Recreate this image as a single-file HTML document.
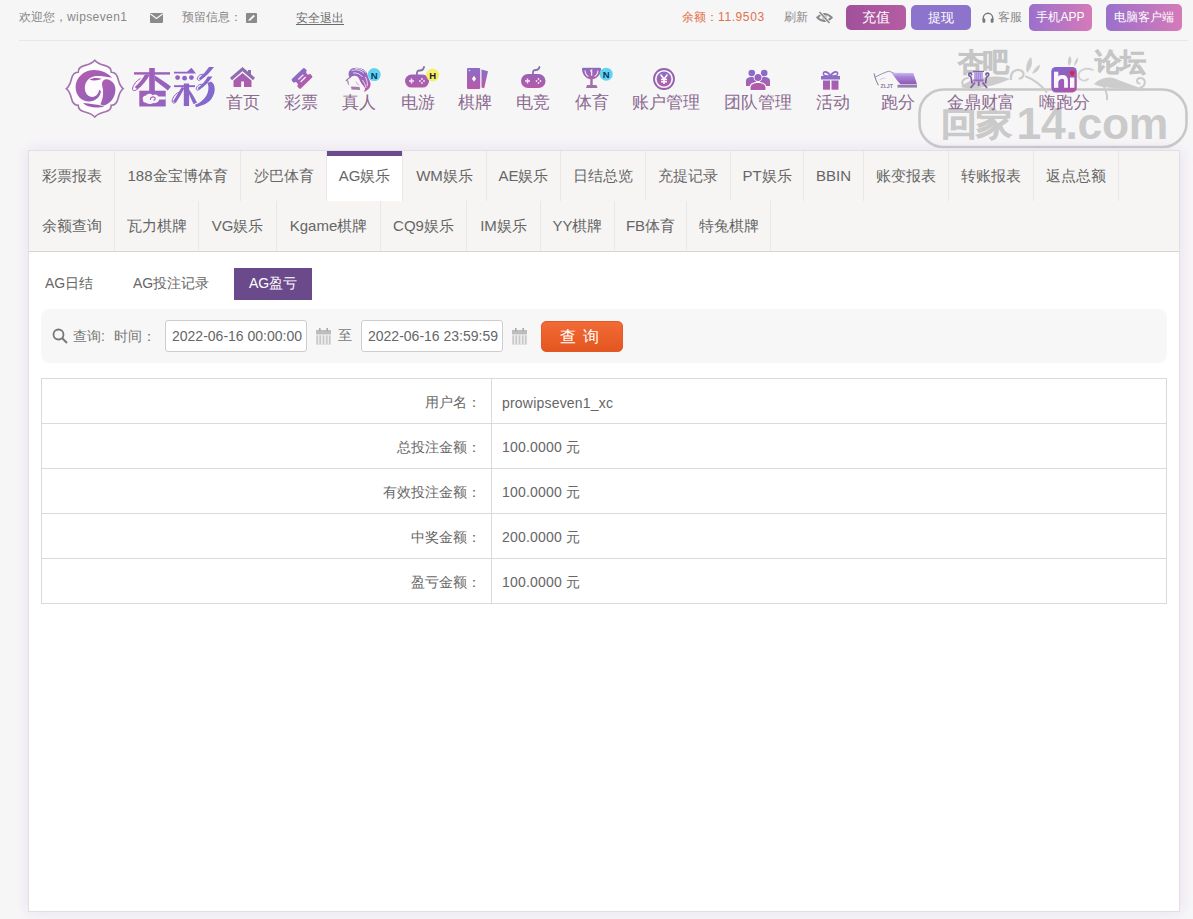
<!DOCTYPE html>
<html><head><meta charset="utf-8">
<style>
*{box-sizing:border-box}
html,body{margin:0;padding:0}
body{width:1193px;height:919px;overflow:hidden;position:relative;background:#f7f6f7;font-family:"Liberation Sans",sans-serif;color:#666}
.a{position:absolute;white-space:nowrap}
.top{font-size:12px;color:#888;line-height:16px}
.btn{position:absolute;top:5px;height:25px;border-radius:5px;color:#fff;font-size:12px;line-height:25px;text-align:center}
.nav{position:absolute;top:92px;font-size:17px;color:#8b6a90;line-height:20px;white-space:nowrap}
.nav svg{display:block;margin:0 auto}
#box{position:absolute;left:28px;top:150px;width:1152px;height:762px;background:#fff;border:1px solid #e2dfe3;box-shadow:0 0 14px rgba(212,190,232,.42)}
#tabs{position:absolute;left:0;top:0;width:1150px;height:101px;background:#f6f5f4;border-bottom:1px solid #d6d4d4}
.tab{position:absolute;height:50px;border-right:1px solid #e9e7e7;font-size:15px;line-height:50px;color:#666;text-align:center}
.tab.on{background:#fff;box-shadow:inset 0 5px 0 #6b4b8c}
.sub{position:absolute;top:117px;height:32px;line-height:31px;font-size:14px;color:#666;text-align:center}
.sub.on{background:#6a4a8b;color:#fff}
#q{position:absolute;left:12px;top:158px;width:1126px;height:54px;background:#f7f7f7;border-radius:8px}
.inp{position:absolute;top:11px;height:32px;border:1px solid #cdcdcd;border-radius:3px;background:#fff;font-size:14px;line-height:31px;color:#666;padding-left:6px}
#tbl{position:absolute;left:12px;top:227px;width:1126px;border-collapse:collapse}
#tbl td{height:45px;border:1px solid #dadada;font-size:14px;color:#666;padding:3px 0 0 0}
#tbl td.l{width:450px;text-align:right;padding-right:10px}
#tbl td.r{padding-left:10px;letter-spacing:0.2px}
</style></head><body>

<!-- top bar -->
<div class="a top" style="left:19px;top:9px">欢迎您，<span style="letter-spacing:0.4px">wipseven1</span></div>
<svg class="a" style="left:150px;top:13px" width="13" height="10" viewBox="0 0 13 10"><rect x="0" y="0" width="13" height="10" rx="1" fill="#8a8a8a"/><path d="M0.5 1 L6.5 5.5 L12.5 1" stroke="#f7f6f7" stroke-width="1.3" fill="none"/></svg>
<div class="a top" style="left:182px;top:9px">预留信息：</div>
<svg class="a" style="left:246px;top:13px" width="11" height="10" viewBox="0 0 11 10"><rect width="11" height="10" rx="1" fill="#8a8a8a"/><path d="M2.5 8 L3 6.2 L7.5 1.8 L8.9 3.2 L4.4 7.6 Z" fill="#f7f6f7"/></svg>
<div class="a top" style="left:296px;top:10px;text-decoration:underline;text-underline-offset:2px;color:#6a6a6a">安全退出</div>

<div class="a top" style="left:682px;top:9px;color:#e0714a">余额：<span style="letter-spacing:0.6px">11.9503</span></div>
<div class="a top" style="left:784px;top:9px;color:#888">刷新</div>
<svg class="a" style="left:816px;top:11px" width="17" height="13" viewBox="0 0 17 13"><path d="M1.2 6.5 Q8.5 -0.5 15.8 6.5 Q8.5 13.5 1.2 6.5 Z" fill="none" stroke="#8a8a8a" stroke-width="1.8"/><circle cx="8.5" cy="6.5" r="2.2" fill="#8a8a8a"/><path d="M3.5 1 L13.5 12" stroke="#f7f6f7" stroke-width="3"/><path d="M3.5 1 L13.5 12" stroke="#8a8a8a" stroke-width="1.6"/></svg>
<div class="btn" style="left:846px;width:60px;font-size:14px;background:linear-gradient(90deg,#a0519a,#b55da3)">充值</div>
<div class="btn" style="left:911px;width:60px;font-size:13px;background:#8c74cc">提现</div>
<svg class="a" style="left:982px;top:12px" width="12" height="11" viewBox="0 0 12 11"><path d="M1.3 8 V6 A4.7 4.7 0 0 1 10.7 6 V8" fill="none" stroke="#777" stroke-width="1.4"/><rect x="0.5" y="6.5" width="2.8" height="4.2" rx="1" fill="#777"/><rect x="8.7" y="6.5" width="2.8" height="4.2" rx="1" fill="#777"/></svg>
<div class="a top" style="left:998px;top:9px;color:#888">客服</div>
<div class="btn" style="left:1029px;top:4px;width:63px;height:27px;line-height:27px;background:linear-gradient(90deg,#9a70cc,#d67ab8)">手机APP</div>
<div class="btn" style="left:1106px;top:4px;width:76px;height:27px;line-height:27px;background:linear-gradient(90deg,#9a70cc,#d67ab8)">电脑客户端</div>
<div class="a" style="left:19px;top:40px;width:1169px;height:1px;background:#e8e7e9"></div>

<!-- NAV placeholder -->
<svg class="a" style="left:0;top:0" width="1193" height="150" viewBox="0 0 1193 150">
 <defs>
  <linearGradient id="g" x1="0" y1="0" x2="0" y2="1"><stop offset="0" stop-color="#8a6cc8"/><stop offset="1" stop-color="#b85aa8"/></linearGradient>
  <linearGradient id="g2" x1="0" y1="0" x2="0" y2="1"><stop offset="0" stop-color="#9a62b6"/><stop offset="1" stop-color="#b45aaa"/></linearGradient>
  <linearGradient id="lg" x1="0" y1="0" x2="1" y2="1"><stop offset="0" stop-color="#b45cb0"/><stop offset="1" stop-color="#8c62b8"/></linearGradient>
  <linearGradient id="lg2" x1="0" y1="0" x2="1" y2="0"><stop offset="0" stop-color="#a95cb2"/><stop offset="1" stop-color="#8a6ac8"/></linearGradient>
 </defs>
 <!-- watermark -->
 <g opacity="0.9">
  <rect x="919.5" y="89.5" width="267" height="57.5" rx="24" fill="rgba(255,255,255,0.2)" stroke="#c4c4c4" stroke-width="2.6"/>
  <text x="958" y="71" font-size="26" font-weight="bold" fill="#d4d4d4" stroke="#c0c0c0" stroke-width="0.7" style="font-family:'Liberation Sans',sans-serif" letter-spacing="-1">杏吧</text>
  <text x="1095" y="71" font-size="26" font-weight="bold" fill="#d4d4d4" stroke="#c0c0c0" stroke-width="0.7" style="font-family:'Liberation Sans',sans-serif" letter-spacing="-1">论坛</text>
  <text transform="translate(941,135) scale(1.13,1)" x="0" y="0" font-size="31.5" font-weight="bold" fill="#c6c6c6" stroke="#c6c6c6" stroke-width="0.8" style="font-family:'Liberation Sans',sans-serif" letter-spacing="-1">回家</text>
  <text x="1016.5" y="138.6" font-size="44.5" font-weight="bold" fill="#c6c6c6" style="font-family:'Liberation Sans',sans-serif" letter-spacing="-0.3">14.com</text>
  <g fill="#c8c8c8">
   <path d="M961 86.5 C968 80 982 76.5 996 76.5 C1002 76.5 1007 77.5 1010 79 C1000 84 985 88 972 88.5 C967 88.7 963 88 961 86.5 Z"/>
   <path d="M1027 73 C1025 67 1027 61 1031 57 C1033 62 1032 68 1027 73 Z"/>
   <path d="M1032 74 C1034 69 1037 66 1040 64.5 C1040 69 1037 72.5 1032 74 Z"/>
   <path d="M1094 84 C1100 78 1108 76 1116 79 C1124 82 1134 86 1142 88.5 C1130 89 1118 89 1108 87.5 C1102 86.8 1097 86 1094 84 Z"/>
   <path d="M1069 66 C1067 62 1068 58 1070 56 C1072 59 1072 63 1069 66 Z"/>
   <path d="M1074 66 C1074 62 1076 59 1078 57.5 C1078.5 61 1077 64 1074 66 Z"/>
  </g>
  <g fill="none" stroke="#c8c8c8" stroke-linecap="round" stroke-width="2">
   <path d="M968 78 C962 78.5 960.5 84 964.5 86"/>
   <path d="M1011 79 C1010 72 1016 68.5 1021 70.5 C1025 72.5 1024 78 1019.5 78.5" stroke-width="2.2"/>
   <path d="M1026 76.5 C1034 79.5 1041 85 1046.5 92"/>
   <path d="M1104 87 C1106 91 1108 95 1107 99.5"/>
   <path d="M1140 88 C1146 86 1146.5 79 1141 78 C1136.5 77.5 1135.5 83 1139.5 83.5"/>
   <path d="M1093 70 C1086 67 1078 70 1078.5 76 C1079 80.5 1085 82 1088 79" stroke="#d0d0d0" stroke-width="1.8"/>
   <path d="M1058 73 C1054 77 1053 85 1054 92" stroke-width="1.6"/>
  </g>
 </g>
 <!-- logo emblem -->
 <path d="M94.75 60.30 C97.30 63.40 100.80 64.50 104.50 65.40 C109.20 66.50 111.40 69.00 111.25 72.20 C114.45 72.05 116.95 74.25 118.05 78.95 C118.95 82.65 120.05 86.15 123.15 88.70 C120.05 91.25 118.95 94.75 118.05 98.45 C116.95 103.15 114.45 105.35 111.25 105.20 C111.40 108.40 109.20 110.90 104.50 112.00 C100.80 112.90 97.30 114.00 94.75 117.10 C92.20 114.00 88.70 112.90 85.00 112.00 C80.30 110.90 78.10 108.40 78.25 105.20 C75.05 105.35 72.55 103.15 71.45 98.45 C70.55 94.75 69.45 91.25 66.35 88.70 C69.45 86.15 70.55 82.65 71.45 78.95 C72.55 74.25 75.05 72.05 78.25 72.20 C78.10 69.00 80.30 66.50 85.00 65.40 C88.70 64.50 92.20 63.40 94.75 60.30 Z" fill="#fdfbfd" stroke="#a274ae" stroke-width="1.6"/>
 <path d="M112 77.8 C108 73 101 70 94.3 70 C84 70 75.6 77.5 75.6 87 C75.6 96 82 101.5 89 101.5 C95 101.5 100.5 97 100.9 91.3 L99.4 89.6 C98.5 94 96 97 92.5 97 C88 97 84.8 93 84.8 88 C84.8 81 90 76 97 76 C102 76 106 76.5 112 77.8 Z" fill="url(#lg)"/>
 <path d="M102 84 C102 80.5 105 78.5 108 79.5 C112 80.5 115.2 84 115.4 89 C115.6 96 112 102 105.5 105 C103.5 105.8 101.5 105.5 100.5 104 C102.5 100 103.5 95 103 90 C102.8 88 102 86 102 84 Z" fill="url(#lg)"/>
 <path d="M89.5 79.8 C92 77.8 97 77.3 101.5 78.8 C99 80.3 94 81.3 89.5 79.8 Z" fill="#a257ae"/>
 <path d="M83 103 C89.5 104 97 104 104.5 106.5 C100 108 94 108 88.5 106.3 C86.5 105.6 84.5 104.5 83 103 Z" fill="#9a5cb2"/>
 <linearGradient id="lgt" gradientUnits="userSpaceOnUse" x1="132" y1="70" x2="214" y2="105"><stop offset="0" stop-color="#a65cb4"/><stop offset="1" stop-color="#7f6ad0"/></linearGradient>
 <g fill="url(#lgt)">
  <rect x="134" y="72.2" width="36" height="2.4"/>
  <rect x="149.2" y="68" width="5.6" height="23"/>
  <path d="M150 74.5 C147 80 142.5 85.5 137.5 89.5 L134.8 87 C139.5 83 142.8 78.5 145 74.5 Z"/>
  <path d="M154.8 75.5 C160 78.5 165.5 82.5 171 86.5 L167.8 90.5 C162.8 86.5 158.5 83 154.8 80.5 Z"/>
  <path d="M139.3 90.7 H165.7 V106.5 H139.3 Z"/>
  <path d="M174 71.8 H187 C188.5 70.5 190 69 191.5 67.8 L196 73.4 H174 Z"/>
  <circle cx="177.6" cy="77.6" r="2.4"/><circle cx="184.6" cy="78.2" r="2.4"/><circle cx="191.4" cy="77.6" r="2.4"/>
  <rect x="174" y="85.2" width="21" height="1.9"/>
  <rect x="183.8" y="83.5" width="5.3" height="22.5"/>
  <path d="M184.5 88 C182 93 179 98 175.8 103 L173 101.5 C175.8 96.8 179 91.8 181.8 87 Z"/>
  <path d="M189 89.5 C192 93.5 194.8 98 197 102.5 L193.6 104.2 C191.5 100 189.5 95.5 188 91.2 Z"/>
  <path d="M214 67 C210.5 71.5 206 76.5 200.5 80.2 L198.8 78.2 C203 74.8 206.5 70.8 209 67 Z"/>
  <path d="M212.5 76.5 C209 81.5 205 86 199.2 90 L197.6 88 C202 84.8 205.3 80.8 207.8 76.5 Z"/>
  <path d="M211 81.5 C215.5 84 216.5 92 211 99.5 C207.5 103.5 201.5 106.3 195.8 107 L195 104.8 C200 103 204 99.8 206.3 95.8 C209 91.2 209 86 207.3 83 Z"/>
 </g>
 <g fill="none" stroke="url(#lgt)" stroke-width="1">
  <path d="M137.5 89 C134.5 91.5 131.8 91 132.6 88 C133.5 84.5 136.5 80.5 140.5 78.5"/>
  <path d="M175.5 102.5 C172.5 104.5 171.3 101.5 172.8 98.3 C174.3 95.2 176.8 93 179.2 92"/>
  <path d="M200.5 79.8 C197.5 81.5 196.3 78.8 198.2 76.4 C199.7 74.6 201.8 74 203.6 74.4"/>
  <path d="M199.2 89.6 C196.2 91.3 195.3 88.4 197.3 86.2 C198.8 84.6 200.8 84 202.6 84.4"/>
 </g>
 <path d="M143.2 100.2 C141.8 98.2 143.2 95.4 145.8 95.8 C146.8 93.4 150.8 92.8 152.4 95.2 C154.4 93.8 157.4 94.2 158.4 96.4 L165.7 96.4 V99.6 L159.2 99.6 C158.8 102 156.2 103.6 153.2 103 C151.2 104.4 147.2 104.4 145.6 102.6 C143.6 102.6 142.6 101.2 143.2 100.2 Z" fill="#f8f6f8"/>
 <path d="M150.5 99.8 C150 97.5 152.5 96.3 154.3 97.3 C155.8 98.2 155.3 100.2 153.5 100.2" fill="none" stroke="#9a62bc" stroke-width="1.2"/>

 <!-- house -->
 <polyline points="231,79 242.5,69 254,79" fill="none" stroke="#8e6eb0" stroke-width="3" stroke-linejoin="miter"/>
 <rect x="248" y="70" width="3" height="5" fill="#8e6eb0"/>
 <path d="M233.5 80.5 L242.5 73 L251.5 80.5 V87 H233.5 Z" fill="url(#g2)"/>
 <rect x="241.2" y="81.5" width="2.8" height="5.5" fill="#fff"/>

 <!-- ticket -->
 <g transform="translate(302 78.3) rotate(-44)">
  <path d="M-7.5 -6.5 H7.5 Q9 -6.5 9 -5 V-2.3 A2.3 2.3 0 0 0 9 2.3 V5 Q9 6.5 7.5 6.5 H-7.5 Q-9 6.5 -9 5 V2.3 A2.3 2.3 0 0 0 -9 -2.3 V-5 Q-9 -6.5 -7.5 -6.5 Z" fill="url(#g)"/>
  <rect x="-3.5" y="-2.3" width="7" height="1.3" fill="#f6e8f8"/>
  <rect x="-3.5" y="1" width="7" height="1.3" fill="#f6e8f8"/>
 </g>

 <!-- woman -->
 <path d="M349 76.5 C347.3 71 351 67.5 357 67.8 C363 68 367 71 367.8 76 C368.3 79 370.6 81 370.6 84 C370.6 87 369.2 89 366.6 90.6 C365.6 91.5 364.6 92 363.8 92 C365 90 365.8 88.5 364 86.5 C362.3 84.5 360.6 82.5 359.6 80 C358.6 77.5 357.5 76.2 355.5 75.8 C353 75.4 351 76.4 350 78.5 Z" fill="url(#g)"/>
 <path d="M351.5 70.5 C355.5 69.2 360.5 70 363.8 73.2 M353 73 C356.8 72.5 360.3 74 362.5 77 M365.3 76.8 C366.8 79.8 367.8 83 367.2 86.2 M355 68.6 C359 68.2 363 69.5 366 72.5 M362.5 80 C364 82.5 365.5 84.5 366 88" fill="none" stroke="#f2e8f6" stroke-width="0.9"/>
 <path d="M350 77 C349 78.5 347.6 79.3 346.3 80.4 L348 81.2 C347.8 82.6 348 83.8 348.8 84.7" fill="none" stroke="#9c78ae" stroke-width="1.1"/>
 <path d="M351 86.5 L359.5 86.9 L360.2 89.9 L351.5 89.6 Z" fill="#a47aa8"/>
 <path d="M356 81.5 C357 83.5 358 85 359.3 85.6" fill="none" stroke="#b890c0" stroke-width="0.8"/>
 <circle cx="374.2" cy="74.6" r="6.5" fill="#60d4ee"/>
 <text x="374.2" y="78.5" font-size="9.5" font-weight="bold" fill="#0e3262" text-anchor="middle" style="font-family:'Liberation Sans',sans-serif">N</text>

 <!-- controller 1 -->
 <path d="M417 74.5 C416.5 71 418 70.5 420 70.5 C422 70.5 423.5 69.5 424 67" fill="none" stroke="#8470a8" stroke-width="1.8" stroke-linecap="round"/>
 <rect x="405" y="74.6" width="24" height="13" rx="6.5" fill="url(#g2)"/>
 <path d="M409 81 H414 M411.5 78.5 V83.5" stroke="#f6e6f6" stroke-width="1.5"/>
 <circle cx="422" cy="79" r="0.9" fill="#f6e6f6"/><circle cx="422" cy="83" r="0.9" fill="#f6e6f6"/><circle cx="420" cy="81" r="0.9" fill="#f6e6f6"/><circle cx="424" cy="81" r="0.9" fill="#f6e6f6"/>
 <circle cx="432.7" cy="75" r="6.5" fill="#f5f06a"/>
 <text x="432.7" y="78.9" font-size="9.5" font-weight="bold" fill="#222" text-anchor="middle" style="font-family:'Liberation Sans',sans-serif">H</text>

 <!-- cards -->
 <path d="M481.5 69.5 L488 71.2 L484.2 88.2 L481.5 87.6 Z" fill="url(#g)"/>
 <rect x="467" y="68" width="13.2" height="21" rx="1" fill="url(#g)"/>
 <path d="M474 75.8 L476 78.8 L474 81.8 L472 78.8 Z" fill="#fff"/>
 <circle cx="469.5" cy="70.5" r="0.8" fill="#e8dcf6"/>

 <!-- controller 2 -->
 <path d="M533 74 C532.5 70.5 534 70 536 70 C538 70 539 69 539.5 67" fill="none" stroke="#8470a8" stroke-width="1.8" stroke-linecap="round"/>
 <rect x="521" y="74" width="24.5" height="14" rx="7" fill="url(#g2)"/>
 <path d="M525 81 H530 M527.5 78.5 V83.5" stroke="#f6e6f6" stroke-width="1.5"/>
 <circle cx="538.5" cy="79" r="0.9" fill="#f6e6f6"/><circle cx="538.5" cy="83" r="0.9" fill="#f6e6f6"/><circle cx="536.5" cy="81" r="0.9" fill="#f6e6f6"/><circle cx="540.5" cy="81" r="0.9" fill="#f6e6f6"/>

 <!-- trophy -->
 <path d="M582.5 68.3 H600.5 C600.5 74.8 596.5 78.8 591.5 78.8 C586.5 78.8 582.5 74.8 582.5 68.3 Z" fill="url(#g)"/>
 <path d="M582.5 68.3 H600.5 C600.5 74.8 596.5 78.8 591.5 78.8 C586.5 78.8 582.5 74.8 582.5 68.3 Z" fill="none" stroke="#8060a8" stroke-width="0.9"/>
 <rect x="590.3" y="78.3" width="2.4" height="7" fill="#a46aae"/>
 <path d="M587 85 H596.5 L597.5 88 H586 Z" fill="#a070a6"/>
 <path d="M585 70.5 C585.3 73.5 586.5 75.5 588.5 76.5" fill="none" stroke="#f2e6f6" stroke-width="1.2"/>
 <path d="M598 70.5 C597.7 73.5 596.5 75.5 594.5 76.5" fill="none" stroke="#f2e6f6" stroke-width="1.2"/>
 <path d="M590.2 71.3 L591.6 70.2 V75.8" fill="none" stroke="#f2e6f6" stroke-width="1.3"/>
 <circle cx="606.2" cy="74.2" r="6.5" fill="#60d4ee"/>
 <text x="606.2" y="78.1" font-size="9.5" font-weight="bold" fill="#0e3262" text-anchor="middle" style="font-family:'Liberation Sans',sans-serif">N</text>

 <!-- yen coin -->
 <circle cx="664" cy="79" r="10" fill="none" stroke="#9462ac" stroke-width="1.8"/>
 <circle cx="664" cy="79" r="7.4" fill="url(#g)"/>
 <path d="M660.5 74.5 L664 79 L667.5 74.5 M664 79 V84 M661 79.5 H667 M661 81.8 H667" fill="none" stroke="#fff" stroke-width="1.5"/>

 <!-- people -->
 <circle cx="751.8" cy="73" r="3.3" fill="#8a6cc8"/>
 <path d="M746 86 V81 C746 78 748.5 77 751.8 77 C755 77 757 78 757 80 L753 86 Z" fill="url(#g)"/>
 <circle cx="764.2" cy="73" r="3.3" fill="#8a6cc8"/>
 <path d="M770 86 V81 C770 78 767.5 77 764.2 77 C761 77 759 78 759 80 L763 86 Z" fill="url(#g)"/>
 <circle cx="758" cy="77.5" r="4.3" fill="#fff"/>
 <circle cx="758" cy="77.5" r="3.5" fill="#9a62bc"/>
 <path d="M749.5 90.5 V87.5 C749.5 83.5 753 82 758 82 C763 82 766.5 83.5 766.5 87.5 V90.5 Z" fill="#fff"/>
 <path d="M750.5 90 V87.8 C750.5 84.5 753.5 83 758 83 C762.5 83 765.5 84.5 765.5 87.8 V90 Z" fill="#b25aac"/>

 <!-- gift -->
 <path d="M830.5 76 C828 71 822.5 70.5 823.5 74.5 C824 76 828 76 830.5 76 C833 76 837 76 837.5 74.5 C838.5 70.5 833 71 830.5 76 Z" fill="none" stroke="#8a6cc8" stroke-width="1.6"/>
 <rect x="821" y="76" width="19" height="3.5" fill="#8e6cc4"/>
 <rect x="823" y="80.5" width="7" height="9.2" fill="url(#g2)"/>
 <rect x="831.5" y="80.5" width="7" height="9.2" fill="url(#g2)"/>

 <!-- rhino logo -->
 <linearGradient id="grh" x1="0" y1="0" x2="0" y2="1"><stop offset="0" stop-color="#cbb8f2"/><stop offset="0.35" stop-color="#a884d8"/><stop offset="1" stop-color="#9058b8"/></linearGradient>
 <path d="M874 73.3 C875 77.5 876.5 82 878.4 85.3" fill="none" stroke="#8e86a0" stroke-width="1.1"/>
 <path d="M874.8 77.2 C878.5 75.5 884 72.5 888.8 71.2 C891 71.8 893 72.8 896 74.2" fill="none" stroke="#9a92aa" stroke-width="1"/>
 <path d="M879.5 80 C881.5 78.5 883.5 78 885.5 78.3" fill="none" stroke="#cdc2dc" stroke-width="0.8"/>
 <path d="M891.5 72.8 L913.3 73 L917 84.2 L900.5 84.2 C897 81 894.5 77 891.5 72.8 Z" fill="url(#grh)"/>
 <text x="880.5" y="88" font-size="5.2" font-weight="bold" fill="#8c7aa0" style="font-family:'Liberation Sans',sans-serif">ZLJT</text>
 <rect x="897.5" y="84.8" width="19.5" height="2.8" fill="#9480b0"/>

 <!-- cauldron -->
 <path d="M973 71.4 H984" stroke="#86629e" stroke-width="1.2"/>
 <rect x="974" y="72" width="9" height="7.4" fill="#bca6ea"/>
 <path d="M976.3 72.5 V79 M978.5 72.5 V79 M980.7 72.5 V79" stroke="#9c80d2" stroke-width="0.8"/>
 <rect x="973.4" y="79.3" width="10.2" height="2.2" fill="#9a6cc8"/>
 <path d="M972 83.5 C971.5 80 971.5 77.5 970.5 76.5 C968.5 76 968 73.5 970 73.2 C971.6 73 972 74.6 971 75.4" fill="none" stroke="#7a5a9a" stroke-width="1.7"/>
 <path d="M985.5 83.5 C986 80 986 77.5 987 76.5 C989 76 989.5 73.5 987.5 73.2 C985.9 73 985.5 74.6 986.5 75.4" fill="none" stroke="#7a5a9a" stroke-width="1.7"/>
 <path d="M975 82.5 L970.5 88 M982.5 82.5 L987 88 M978.7 81.5 V86" stroke="#8a60a8" stroke-width="1.8"/>

 <!-- hi -->
 <linearGradient id="gh" x1="0" y1="0" x2="1" y2="1"><stop offset="0" stop-color="#7c68d6"/><stop offset="1" stop-color="#b4529e"/></linearGradient>
 <rect x="1051.3" y="67" width="25.5" height="25.4" rx="4.5" fill="url(#gh)"/>
 <rect x="1054" y="71.7" width="4.3" height="16.1" fill="#fbf6fb"/>
 <path d="M1056.5 81 C1058 77.5 1060.5 76.8 1062.5 76.8 C1065 76.8 1066 78.5 1066 80.5 V87.8" fill="none" stroke="#fbf6fb" stroke-width="3.8"/>
 <rect x="1070" y="77.5" width="4.4" height="10.3" fill="#fbf6fb"/>
 <path d="M1072.2 76 C1069 73.5 1069.5 71 1071 71 C1071.7 71 1072.2 71.6 1072.2 72 C1072.2 71.6 1072.7 71 1073.4 71 C1075 71 1075.4 73.5 1072.2 76 Z" fill="#d8283e"/>
 </svg>
<div class="nav" style="left:226px;top:93px">首页</div>
<div class="nav" style="left:284px;top:93px">彩票</div>
<div class="nav" style="left:342px;top:93px">真人</div>
<div class="nav" style="left:401px;top:93px">电游</div>
<div class="nav" style="left:458px;top:93px">棋牌</div>
<div class="nav" style="left:516px;top:93px">电竞</div>
<div class="nav" style="left:575px;top:93px">体育</div>
<div class="nav" style="left:632px;top:93px">账户管理</div>
<div class="nav" style="left:724px;top:93px">团队管理</div>
<div class="nav" style="left:816px;top:93px">活动</div>
<div class="nav" style="left:881px;top:93px">跑分</div>
<div class="nav" style="left:947px;top:93px">金鼎财富</div>
<div class="nav" style="left:1039px;top:93px">嗨跑分</div>


<!-- main box -->
<div id="box">
 <div id="tabs">
  <div class="tab" style="left:0;top:0;width:86px">彩票报表</div>
  <div class="tab" style="left:86px;top:0;width:126px">188金宝博体育</div>
  <div class="tab" style="left:212px;top:0;width:86px">沙巴体育</div>
  <div class="tab on" style="left:298px;top:0;width:76px">AG娱乐</div>
  <div class="tab" style="left:374px;top:0;width:84px">WM娱乐</div>
  <div class="tab" style="left:458px;top:0;width:74px">AE娱乐</div>
  <div class="tab" style="left:532px;top:0;width:85px">日结总览</div>
  <div class="tab" style="left:617px;top:0;width:85px">充提记录</div>
  <div class="tab" style="left:702px;top:0;width:73px">PT娱乐</div>
  <div class="tab" style="left:775px;top:0;width:60px">BBIN</div>
  <div class="tab" style="left:835px;top:0;width:85px">账变报表</div>
  <div class="tab" style="left:920px;top:0;width:85px">转账报表</div>
  <div class="tab" style="left:1005px;top:0;width:85px">返点总额</div>
  <div class="tab" style="left:0;top:50px;width:86px">余额查询</div>
  <div class="tab" style="left:86px;top:50px;width:84px">瓦力棋牌</div>
  <div class="tab" style="left:170px;top:50px;width:78px">VG娱乐</div>
  <div class="tab" style="left:248px;top:50px;width:104px">Kgame棋牌</div>
  <div class="tab" style="left:352px;top:50px;width:86px">CQ9娱乐</div>
  <div class="tab" style="left:438px;top:50px;width:74px">IM娱乐</div>
  <div class="tab" style="left:512px;top:50px;width:74px">YY棋牌</div>
  <div class="tab" style="left:586px;top:50px;width:72px">FB体育</div>
  <div class="tab" style="left:658px;top:50px;width:84px">特兔棋牌</div>
 </div>
 <div class="sub" style="left:4px;width:72px">AG日结</div>
 <div class="sub" style="left:94px;width:96px">AG投注记录</div>
 <div class="sub on" style="left:205px;width:78px">AG盈亏</div>
 <div id="q">
  <svg class="a" style="left:11px;top:19px" width="16" height="16" viewBox="0 0 16 16"><circle cx="6.5" cy="6.5" r="5" fill="none" stroke="#777" stroke-width="1.8"/><path d="M10 10 L15 15" stroke="#777" stroke-width="2"/></svg>
  <div class="a" style="left:32px;top:18px;font-size:14px;line-height:18px;color:#777">查询:</div><div class="a" style="left:73px;top:18px;font-size:14px;line-height:18px;color:#777">时间：</div>
  <div class="inp" style="left:124px;width:142px">2022-06-16 00:00:00</div>
  <svg class="a" style="left:275px;top:19px" width="15" height="17" viewBox="0 0 15 17"><rect x="0" y="2" width="15" height="4.6" fill="#bdbdbd"/><rect x="3" y="0" width="1.6" height="3" fill="#aaaaaa"/><rect x="10.4" y="0" width="1.6" height="3" fill="#aaaaaa"/><rect x="0" y="6.6" width="15" height="10" fill="#ececec"/><path d="M1.2 7.5 V16 M4.2 7.5 V16 M7.5 7.5 V16 M10.8 7.5 V16 M13.8 7.5 V16" stroke="#c6c6c6" stroke-width="1.5"/><path d="M0 16.3 H15" stroke="#d8d8d8" stroke-width="0.8"/></svg>
  <div class="a" style="left:297px;top:17px;font-size:14px;line-height:18px;color:#777">至</div>
  <div class="inp" style="left:320px;width:142px">2022-06-16 23:59:59</div>
  <svg class="a" style="left:471px;top:19px" width="15" height="17" viewBox="0 0 15 17"><rect x="0" y="2" width="15" height="4.6" fill="#bdbdbd"/><rect x="3" y="0" width="1.6" height="3" fill="#aaaaaa"/><rect x="10.4" y="0" width="1.6" height="3" fill="#aaaaaa"/><rect x="0" y="6.6" width="15" height="10" fill="#ececec"/><path d="M1.2 7.5 V16 M4.2 7.5 V16 M7.5 7.5 V16 M10.8 7.5 V16 M13.8 7.5 V16" stroke="#c6c6c6" stroke-width="1.5"/><path d="M0 16.3 H15" stroke="#d8d8d8" stroke-width="0.8"/></svg>
  <div class="a" style="left:500px;top:11.5px;width:82px;height:31px;border-radius:5px;background:linear-gradient(180deg,#f26a36,#e4561f);border:1px solid #e05a2a;color:#fff;font-size:16px;line-height:29px;text-align:center;letter-spacing:7px;padding-left:2px">查询</div>
 </div>
 <table id="tbl">
  <tr><td class="l">用户名：</td><td class="r">prowipseven1_xc</td></tr>
  <tr><td class="l">总投注金额：</td><td class="r">100.0000 元</td></tr>
  <tr><td class="l">有效投注金额：</td><td class="r">100.0000 元</td></tr>
  <tr><td class="l">中奖金额：</td><td class="r">200.0000 元</td></tr>
  <tr><td class="l">盈亏金额：</td><td class="r">100.0000 元</td></tr>
 </table>
</div>
</body></html>
